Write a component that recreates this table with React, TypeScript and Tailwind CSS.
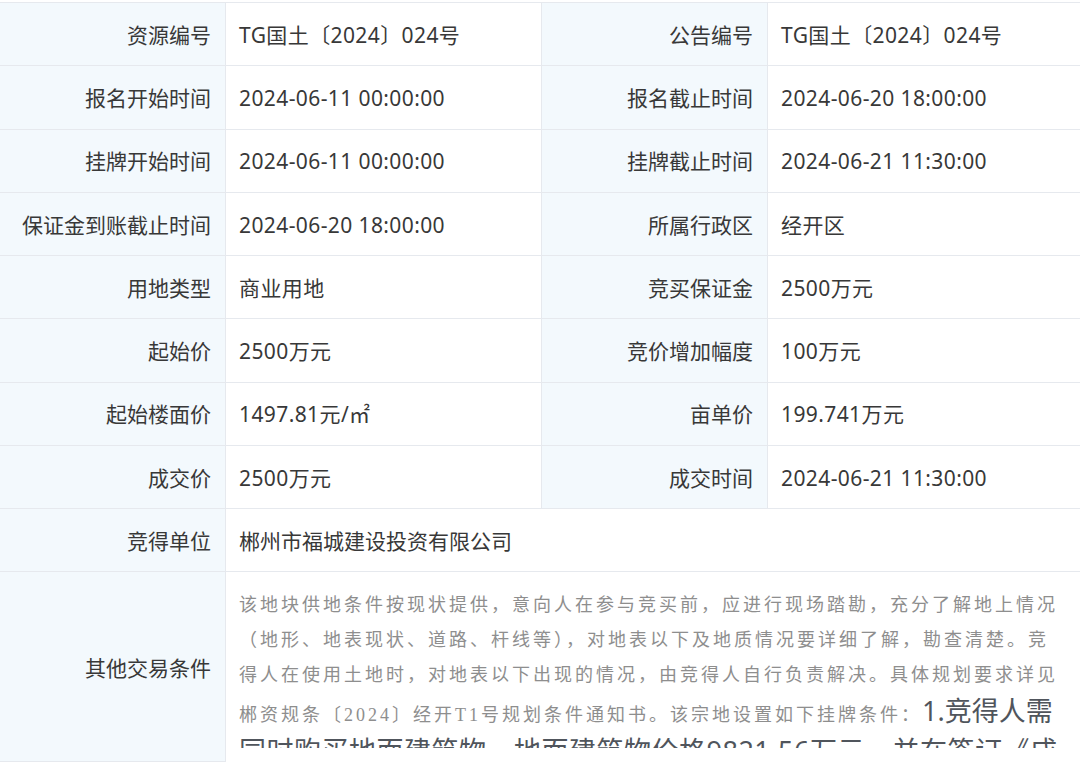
const rows: [string, string, string, string][] = [
  ["资源编号", "TG国土〔2024〕024号", "公告编号", "TG国土〔2024〕024号"],
  ["报名开始时间", "2024-06-11 00:00:00", "报名截止时间", "2024-06-20 18:00:00"],
  ["挂牌开始时间", "2024-06-11 00:00:00", "挂牌截止时间", "2024-06-21 11:30:00"],
  ["保证金到账截止时间", "2024-06-20 18:00:00", "所属行政区", "经开区"],
  ["用地类型", "商业用地", "竞买保证金", "2500万元"],
  ["起始价", "2500万元", "竞价增加幅度", "100万元"],
  ["起始楼面价", "1497.81元/㎡", "亩单价", "199.741万元"],
  ["成交价", "2500万元", "成交时间", "2024-06-21 11:30:00"],
];

const labelCls =
  "flex items-center justify-end pr-[14px] pt-[3px] bg-[#f3f9fd] border-r border-b border-[#e6e9ee] whitespace-nowrap";
const valueCls =
  "flex items-center pl-[13px] pt-[3px] border-r border-b border-[#e6e9ee] whitespace-nowrap tracking-[0.4px]";

export default function App() {
  return (
    <div
      className="w-[1080px] h-[762px] overflow-hidden bg-white pt-[2px] text-[21px] text-[#383838]"
      style={{ fontFamily: '"Noto Sans", "Noto Sans CJK SC", sans-serif' }}
    >
      <div className="grid grid-cols-[226px_316px_226px_1fr] border-t border-[#e6e9ee]">
        {rows.map(([l1, v1, l2, v2]) => (
          <div key={l1} className="contents">
            <div className={`${labelCls} h-[63.25px]`}>{l1}</div>
            <div className={`${valueCls} h-[63.25px]`}>{v1}</div>
            <div className={`${labelCls} h-[63.25px]`}>{l2}</div>
            <div className={`${valueCls} h-[63.25px] border-r-0`}>{v2}</div>
          </div>
        ))}

        {/* 竞得单位 */}
        <div className={`${labelCls} h-[63.25px]`}>竞得单位</div>
        <div className={`${valueCls} h-[63.25px] col-span-3 border-r-0 tracking-normal`}>郴州市福城建设投资有限公司</div>

        {/* 其他交易条件 */}
        <div className={`${labelCls} h-[190px] pt-0`}>其他交易条件</div>
        <div className="col-span-3 px-[13px] pt-[16px] pb-[14px] border-b border-[#e6e9ee]">
          <div className="h-[160px] overflow-hidden whitespace-nowrap">
            <div
              className="text-[18px] leading-[35px] tracking-[3px] text-[#8e8e8e]"
              style={{ fontFamily: '"Liberation Serif", "Noto Sans CJK SC", serif' }}
            >
              <span className="block">该地块供地条件按现状提供，意向人在参与竞买前，应进行现场踏勘，充分了解地上情况</span>
              <span className="block">（地形、地表现状、道路、杆线等），对地表以下及地质情况要详细了解，勘查清楚。竞</span>
              <span className="block">得人在使用土地时，对地表以下出现的情况，由竞得人自行负责解决。具体规划要求详见</span>
              <span className="block">
                郴资规条〔2024〕经开T1号规划条件通知书。该宗地设置如下挂牌条件：
                <span
                  className="text-[27px] tracking-normal text-[#50555c]"
                  style={{ fontFamily: '"Noto Sans", "Noto Sans CJK SC", sans-serif' }}
                >
                  1.竞得人需
                </span>
              </span>
              <div
                className="text-[27px] tracking-[0.5px] text-[#50555c]"
                style={{ fontFamily: '"Noto Sans", "Noto Sans CJK SC", sans-serif' }}
              >
                <span className="block">同时购买地面建筑物，地面建筑物价格9821.56万元，并在签订《成</span>
                <span className="block">交确认书》</span>
              </div>
            </div>
          </div>
        </div>
      </div>
    </div>
  );
}
